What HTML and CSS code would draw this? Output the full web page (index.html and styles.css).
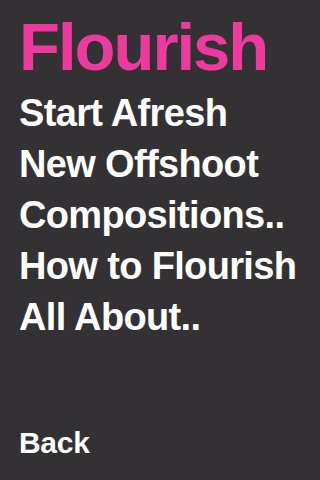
FILE: index.html
```html
<!DOCTYPE html>
<html>
<head>
<meta charset="utf-8">
<link rel="stylesheet" href="styles.css">
</head>
<body>
<div class="screen">
  <h1 class="title">Flourish</h1>
  <ul class="menu">
    <li class="item">Start Afresh</li>
    <li class="item">New Offshoot</li>
    <li class="item">Compositions..</li>
    <li class="item">How to Flourish</li>
    <li class="item">All About..</li>
  </ul>
  <div class="back">Back</div>
</div>
</body>
</html>
```
FILE: styles.css
```css
html, body {
  margin: 0;
  padding: 0;
  background: #333133;
}
.screen {
  height: 480px;
  box-sizing: border-box;
  display: flex;
  flex-direction: column;
  padding: 13px 0 22px 19px;
  font-family: "Liberation Sans", Arial, sans-serif;
  font-weight: bold;
  color: #ffffff;
}
.title {
  margin: 0;
  font-size: 67px;
  line-height: 67px;
  letter-spacing: -2px;
  color: #ec3a9e;
  font-weight: bold;
}
.menu {
  list-style: none;
  margin: 8px 0 0 0;
  padding: 0;
}
.item {
  font-size: 38px;
  line-height: 51px;
  letter-spacing: -0.65px;
}
.back {
  margin-top: auto;
  font-size: 30px;
  line-height: 30px;
  letter-spacing: -0.3px;
}
```
